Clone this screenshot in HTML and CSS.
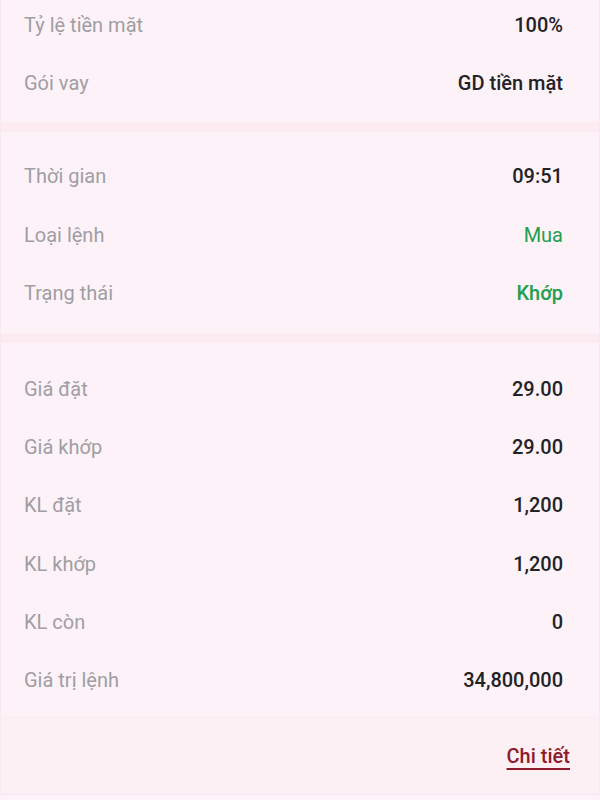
FILE: index.html
```html
<!DOCTYPE html>
<html lang="vi">
<head>
<meta charset="utf-8">
<link rel="stylesheet" href="styles.css">
</head>
<body>
<div class="page">
  <div class="group first">
    <div class="row"><span class="label">Tỷ lệ tiền mặt</span><span class="value">100%</span></div>
    <div class="row"><span class="label">Gói vay</span><span class="value">GD tiền mặt</span></div>
  </div>
  <div class="sep"></div>
  <div class="group second">
    <div class="row"><span class="label">Thời gian</span><span class="value">09:51</span></div>
    <div class="row"><span class="label">Loại lệnh</span><span class="value buy regular">Mua</span></div>
    <div class="row"><span class="label">Trạng thái</span><span class="value buy">Khớp</span></div>
  </div>
  <div class="sep"></div>
  <div class="group third">
    <div class="row"><span class="label">Giá đặt</span><span class="value">29.00</span></div>
    <div class="row"><span class="label">Giá khớp</span><span class="value">29.00</span></div>
    <div class="row"><span class="label">KL đặt</span><span class="value">1,200</span></div>
    <div class="row"><span class="label">KL khớp</span><span class="value">1,200</span></div>
    <div class="row"><span class="label">KL còn</span><span class="value">0</span></div>
    <div class="row"><span class="label">Giá trị lệnh</span><span class="value">34,800,000</span></div>
  </div>
  <div class="footer">
    <a class="detail" href="#">Chi tiết</a>
  </div>
</div>
</body>
</html>
```
FILE: styles.css
```css
html, body {
  margin: 0;
  padding: 0;
  background: #fdf2f7;
  height: 100%;
  overflow: hidden;
}
.page {
  font-family: Roboto, "Noto Sans", sans-serif;
  font-size: 20px;
  border-left: 1px solid #f8e8ef;
  border-right: 1px solid #f8e8ef;
  min-height: 800px;
  box-sizing: border-box;
}
.group {
  padding: 16px 0 10px;
}
.group.first {
  margin-top: -20px;
}
.group.second {
  padding: 15px 0 11px;
}
.group.third {
  padding: 17px 0 8px;
}
.row {
  height: 58.2px;
  display: flex;
  align-items: center;
  justify-content: space-between;
  padding: 0 36px 0 23px;
}
.label {
  color: #9f9ea3;
}
.value {
  font-family: "Roboto Medium", Roboto, sans-serif;
  color: #232327;
  font-weight: 500;
}
.value.buy {
  color: #22a04f;
}
.value.regular {
  font-family: Roboto, sans-serif;
  font-weight: 400;
}
.sep {
  height: 10px;
  background: #fcecf2;
}
.footer {
  height: 76px;
  display: flex;
  align-items: center;
  justify-content: flex-end;
  padding: 0 29px 0 0;
  background: #fdf0f5;
  border-top: 1px solid #fcecf2;
  border-bottom: 1px solid #f6e8ee;
}
.detail {
  color: #8e1b2c;
  font-family: "Roboto Medium", Roboto, sans-serif;
  font-weight: 500;
  text-decoration: underline;
  text-underline-offset: 5px;
  text-decoration-thickness: 2px;
}
```
